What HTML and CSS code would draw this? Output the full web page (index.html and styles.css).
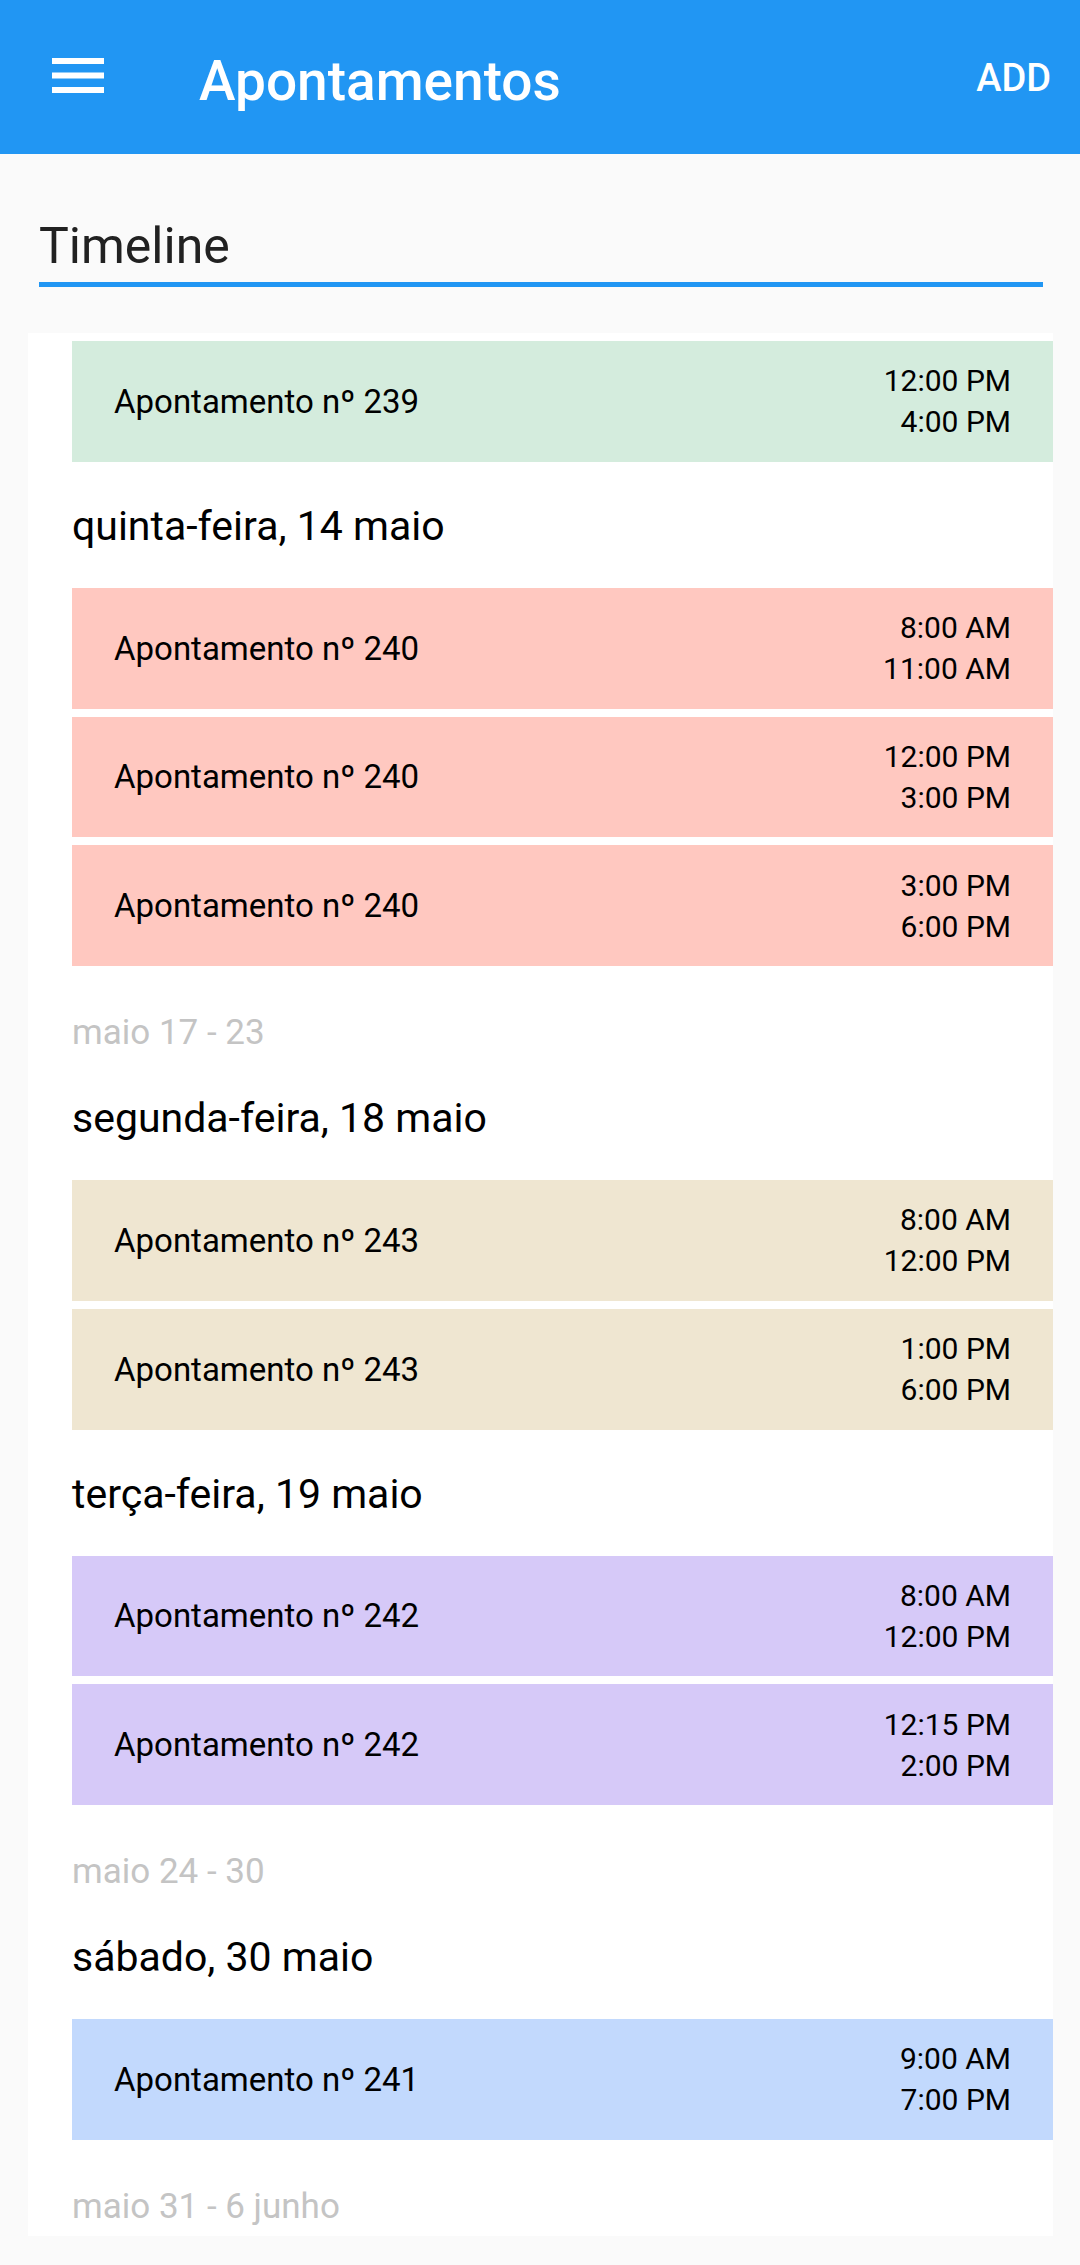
FILE: index.html
```html
<!DOCTYPE html>
<html lang="pt">
<head>
    <meta charset="UTF-8">
    <meta name="viewport" content="width=device-width, initial-scale=1.0">
    <title>Apontamentos</title>
    <link rel="stylesheet" href="styles.css">
</head>
<body>
    <header class="toolbar">
        <div class="menu-icon">
            <svg width="52" height="35" viewBox="0 0 52 35">
                <rect x="0" y="0" width="52" height="6" fill="#fff"/>
                <rect x="0" y="14.5" width="52" height="6" fill="#fff"/>
                <rect x="0" y="29" width="52" height="6" fill="#fff"/>
            </svg>
        </div>
        <h1 class="toolbar-title">Apontamentos</h1>
        <div class="toolbar-action">ADD</div>
    </header>

    <div class="content">
        <div class="tab-field">
            <div class="tab-label">Timeline</div>
            <div class="tab-line"></div>
        </div>

        <div class="timeline">
            <div class="appt green">
                <span class="appt-name">Apontamento nº 239</span>
                <span class="appt-time">12:00 PM<br>4:00 PM</span>
            </div>

            <div class="day">quinta-feira, 14 maio</div>
            <div class="appt red">
                <span class="appt-name">Apontamento nº 240</span>
                <span class="appt-time">8:00 AM<br>11:00 AM</span>
            </div>
            <div class="appt red">
                <span class="appt-name">Apontamento nº 240</span>
                <span class="appt-time">12:00 PM<br>3:00 PM</span>
            </div>
            <div class="appt red">
                <span class="appt-name">Apontamento nº 240</span>
                <span class="appt-time">3:00 PM<br>6:00 PM</span>
            </div>

            <div class="week">maio 17 - 23</div>
            <div class="day">segunda-feira, 18 maio</div>
            <div class="appt beige">
                <span class="appt-name">Apontamento nº 243</span>
                <span class="appt-time">8:00 AM<br>12:00 PM</span>
            </div>
            <div class="appt beige">
                <span class="appt-name">Apontamento nº 243</span>
                <span class="appt-time">1:00 PM<br>6:00 PM</span>
            </div>

            <div class="day">terça-feira, 19 maio</div>
            <div class="appt purple">
                <span class="appt-name">Apontamento nº 242</span>
                <span class="appt-time">8:00 AM<br>12:00 PM</span>
            </div>
            <div class="appt purple">
                <span class="appt-name">Apontamento nº 242</span>
                <span class="appt-time">12:15 PM<br>2:00 PM</span>
            </div>

            <div class="week">maio 24 - 30</div>
            <div class="day">sábado, 30 maio</div>
            <div class="appt blue">
                <span class="appt-name">Apontamento nº 241</span>
                <span class="appt-time">9:00 AM<br>7:00 PM</span>
            </div>

            <div class="week">maio 31 - 6 junho</div>
        </div>
    </div>
</body>
</html>
```

FILE: styles.css
```css
body {
    font-family: Roboto, "Noto Sans", sans-serif;
    margin: 0;
    padding: 0;
    background-color: #fafafa;
    color: #000;
}
.toolbar {
    display: flex;
    align-items: center;
    height: 154px;
    background-color: #2196f3;
    color: #fff;
    padding: 0 29px 0 52px;
    box-sizing: border-box;
}
.menu-icon {
    display: flex;
    margin-bottom: 3px;
}
.toolbar-title {
    flex-grow: 1;
    margin: 0 0 0 95px;
    padding-top: 8px;
    font-size: 55px;
    font-weight: 500;
}
.toolbar-action {
    font-size: 38px;
    font-weight: 500;
    padding-top: 2px;
}
.content {
    padding: 0 27px 0 28px;
}
.tab-field {
    padding: 63px 10px 0 11px;
}
.tab-label {
    font-size: 50px;
    color: #212121;
}
.tab-line {
    height: 5px;
    margin-top: 7px;
    background-color: #2196f3;
}
.timeline {
    margin-top: 46px;
    background-color: #fff;
    padding-top: 8px;
}
.appt {
    display: flex;
    align-items: center;
    justify-content: space-between;
    height: 120.75px;
    margin: 0 0 8px 44px;
    padding: 0 42px 0 42px;
}
.appt-name {
    font-size: 33px;
}
.appt-time {
    font-size: 30px;
    line-height: 41px;
    text-align: right;
}
.green { background-color: #d4ecdd; }
.red { background-color: #ffc8c0; }
.beige { background-color: #efe6d1; }
.purple { background-color: #d6c9f8; }
.blue { background-color: #c2d9fd; }
.day {
    font-size: 41px;
    line-height: 48px;
    padding: 32px 0 38px 44px;
}
.week {
    font-size: 35px;
    line-height: 41px;
    color: #c4c4c4;
    padding: 38px 0 9px 44px;
}
```
